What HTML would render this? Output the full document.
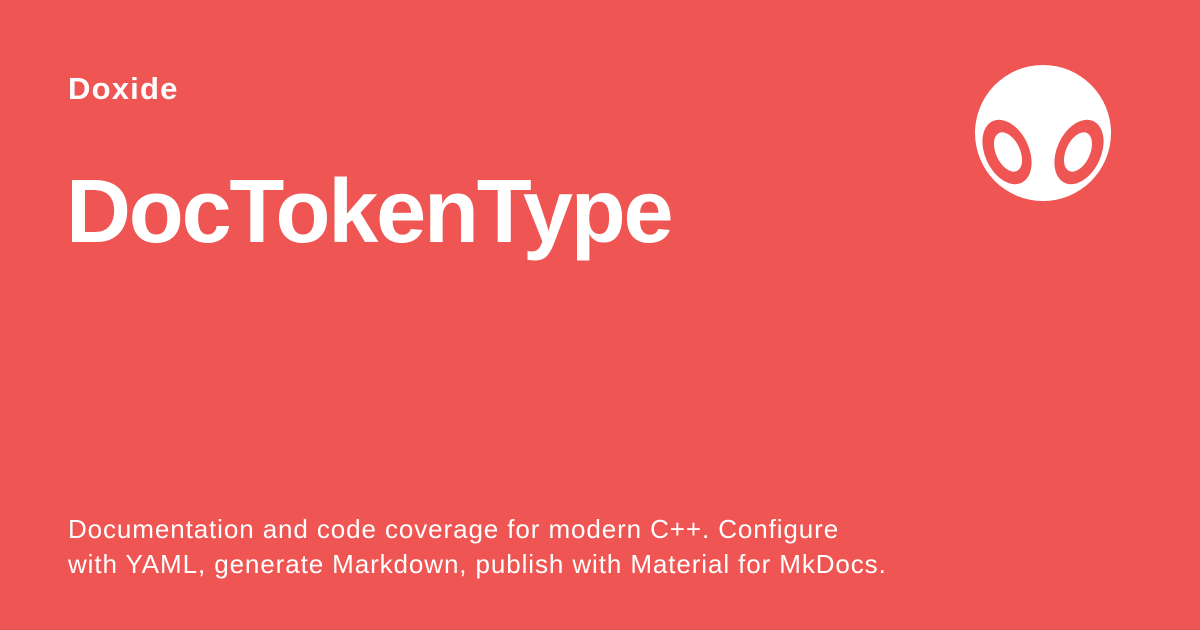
<!DOCTYPE html>
<html><head><style>
body{margin:0;width:1200px;height:630px;background:#ef5552;font-family:"Liberation Sans",sans-serif;color:#fff;position:relative;overflow:hidden}
.s{position:absolute;left:68px;top:71px;font-size:31px;font-weight:bold;letter-spacing:1.2px}
.t{position:absolute;left:66px;top:167px;font-size:90px;line-height:1;font-weight:bold;letter-spacing:-2.2px}
.d{position:absolute;left:68px;top:512px;font-size:26px;line-height:35px;letter-spacing:0.9px}
svg{position:absolute;left:0;top:0}
</style></head><body>
<div class="s">Doxide</div>
<div class="t">DocTokenType</div>
<div class="d">Documentation and code coverage for modern C++. Configure<br>with YAML, generate Markdown, publish with Material for MkDocs.</div>
<svg width="1200" height="630">
<circle cx="1043" cy="133" r="68" fill="#fff"/>
<ellipse cx="1007" cy="152" rx="22" ry="34" transform="rotate(-25 1007 152)" fill="#ef5552"/>
<ellipse cx="1008" cy="152" rx="12" ry="21" transform="rotate(-25 1008 152)" fill="#fff"/>
<ellipse cx="1079" cy="152" rx="22" ry="34" transform="rotate(25 1079 152)" fill="#ef5552"/>
<ellipse cx="1078" cy="152" rx="12" ry="21" transform="rotate(25 1078 152)" fill="#fff"/>
</svg>
</body></html>
